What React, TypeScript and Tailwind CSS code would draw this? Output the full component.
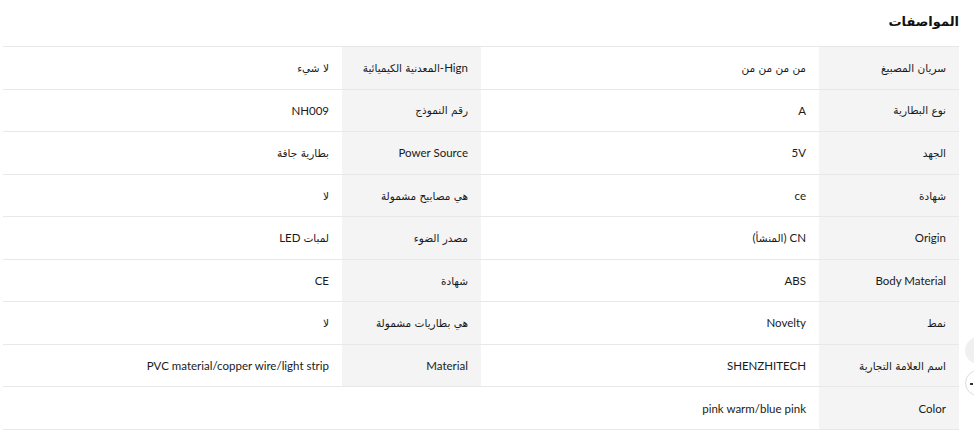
const rows: [string, string, string?, string?][] = [
  ["سريان المصبيغ", "من من من من", "Hign-المعدنية الكيميائية", "لا شيء"],
  ["نوع البطارية", "A", "رقم النموذج", "NH009"],
  ["الجهد", "5V", "Power Source", "بطارية جافة"],
  ["شهادة", "ce", "هي مصابيح مشمولة", "لا"],
  ["Origin", "CN (المنشأ)", "مصدر الضوء", "لمبات LED"],
  ["Body Material", "ABS", "شهادة", "CE"],
  ["نمط", "Novelty", "هي بطاريات مشمولة", "لا"],
  ["اسم العلامة التجارية", "SHENZHITECH", "Material", "PVC material/copper wire/light strip"],
  ["Color", "pink warm/blue pink"],
];

const font = { fontFamily: "Lato, 'DejaVu Sans', sans-serif" };

// arabic runs get a smaller size so they sit close to the latin text width
function Mixed({ text }: { text: string }) {
  const parts = text.split(/([\u0600-\u06FF]+(?:\s+[\u0600-\u06FF]+)*)/).filter(Boolean);
  return (
    <span className="whitespace-nowrap">
      {parts.map((p, i) =>
        /[\u0600-\u06FF]/.test(p) ? (
          <span key={i} className="text-[10.5px]" style={{ fontFamily: "'DejaVu Sans', sans-serif" }}>
            {p}
          </span>
        ) : (
          <span key={i}>{p}</span>
        )
      )}
    </span>
  );
}

function Cell({ text, gray, width }: { text: string; gray?: boolean; width: string }) {
  return (
    <div
      className={`flex items-center justify-start pr-[13px] pl-1 text-[11.5px] text-[#1a1a1a] ${width} ${
        gray ? "bg-[#f4f4f4]" : "bg-white"
      }`}
    >
      <Mixed text={text} />
    </div>
  );
}

export default function App() {
  return (
    <div dir="rtl" className="relative h-[434px] w-[974px] overflow-hidden bg-white" style={font}>
      <div className="pr-[15px] pl-[3px]">
        <h2
          className="h-[46px] pt-[12px] text-[13px] font-bold text-[#111]"
          style={{ fontFamily: "'DejaVu Sans', sans-serif" }}
        >
          المواصفات
        </h2>
        <div className="border-t border-[#e8e8e8]">
          {rows.map((r, i) => (
            <div key={i} className="flex h-[42.55px] border-b border-[#e8e8e8]">
              <Cell text={r[0]} gray width="w-[140px]" />
              {r[2] !== undefined ? (
                <>
                  <Cell text={r[1]} width="w-[338px]" />
                  <Cell text={r[2]} gray width="w-[139px]" />
                  <Cell text={r[3] ?? ""} width="flex-1" />
                </>
              ) : (
                <Cell text={r[1]} width="flex-1" />
              )}
            </div>
          ))}
        </div>
      </div>
      <div className="absolute left-[965px] top-[337px] h-[27px] w-[27px] rounded-full bg-[#f0f0f0]" />
      <div className="absolute left-[965px] top-[370px] h-[26px] w-[26px] rounded-full border border-[#dcdcdc] bg-white">
        <span className="absolute left-[4px] top-[12px] h-[2px] w-[3px] bg-[#333]" />
      </div>
    </div>
  );
}
